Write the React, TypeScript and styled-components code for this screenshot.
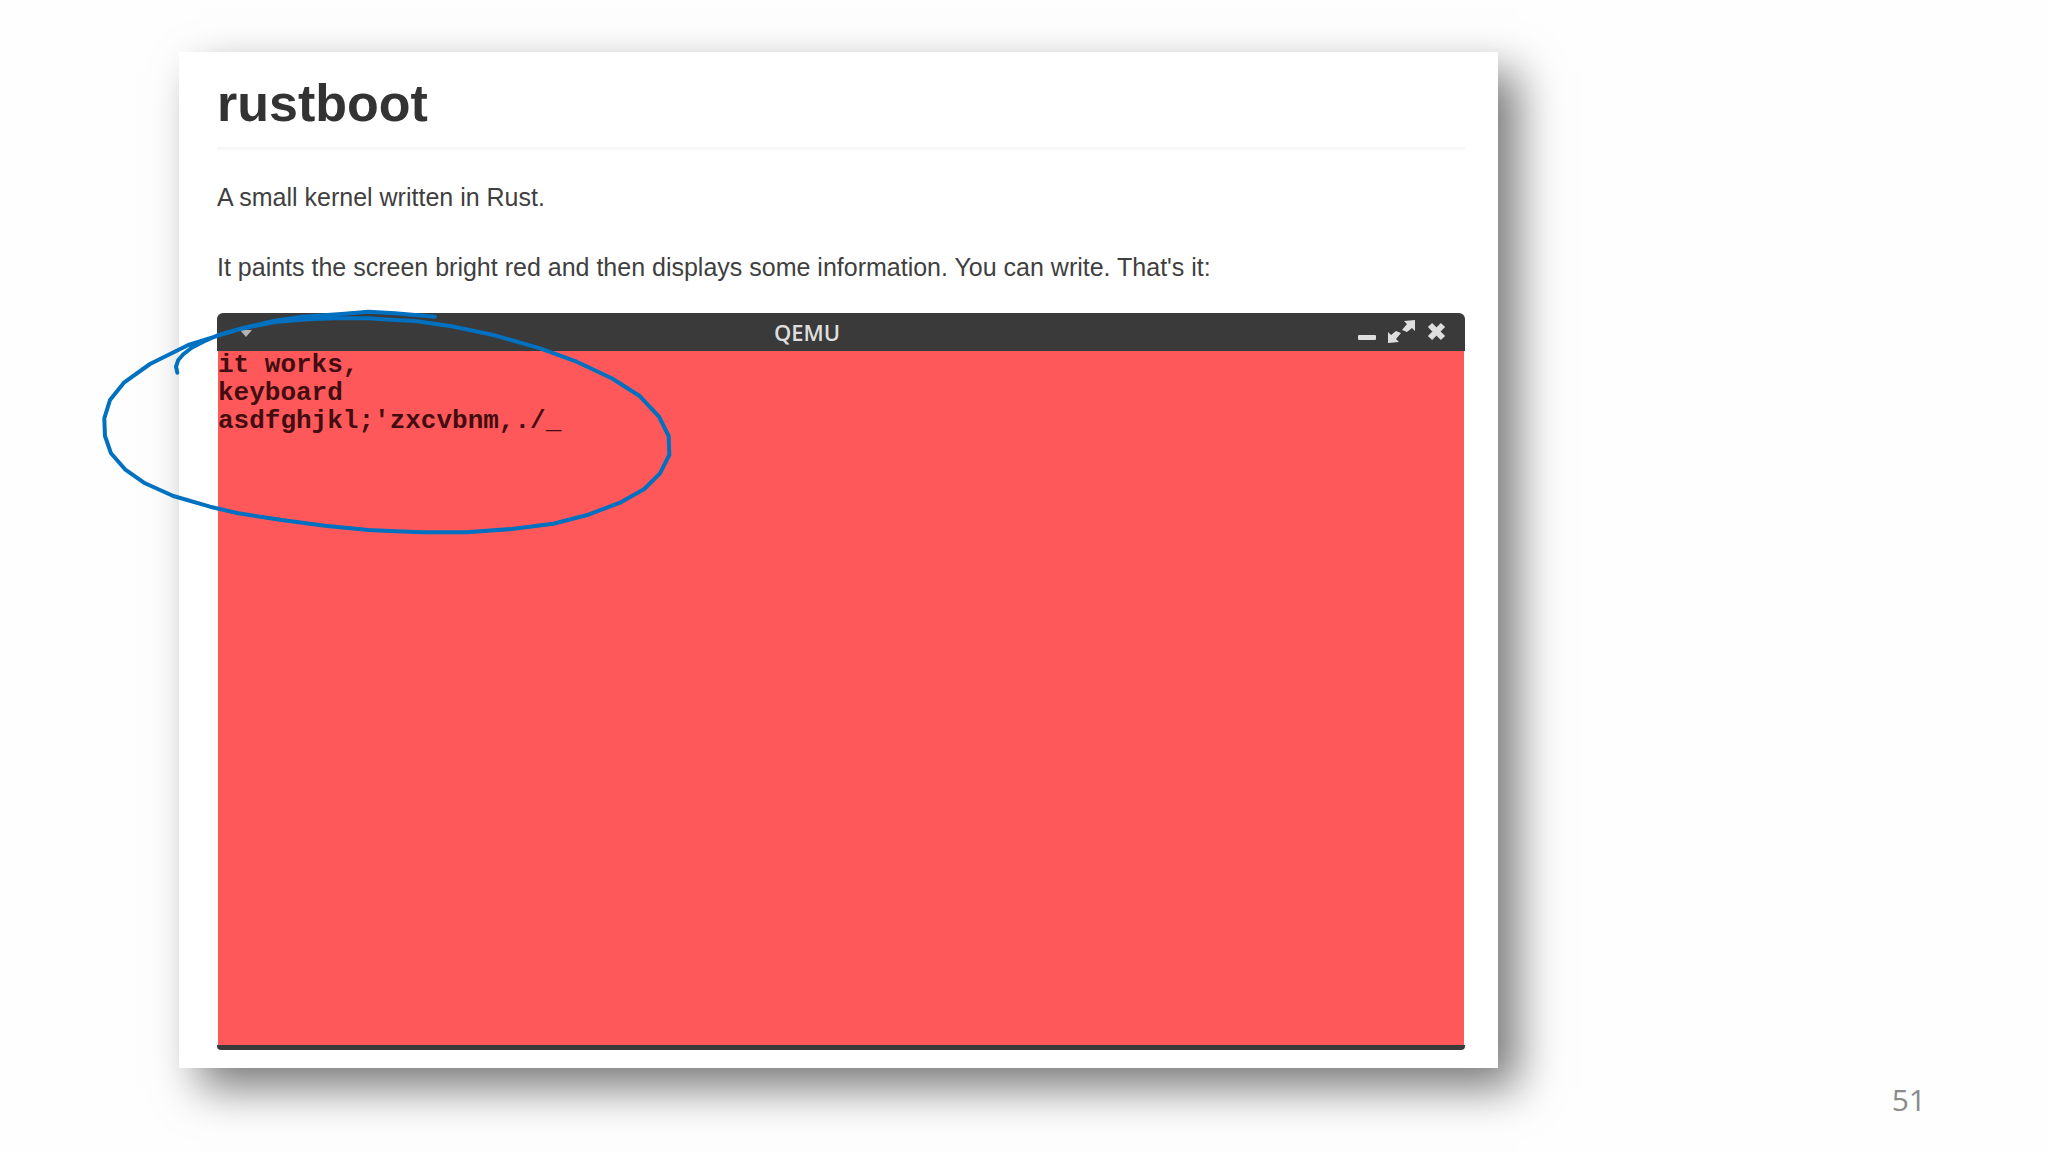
import React from "react";
import styled, { createGlobalStyle } from "styled-components";

const GlobalStyle = createGlobalStyle`
  * { box-sizing: border-box; }
  body { margin: 0; background: #fefefe; }
`;

const Slide = styled.main`
  display: grid;
  grid-template-columns: minmax(0, 1319px) 1fr;
  min-height: 100vh;
  padding: 52px 122px 32px 179px;
  font-family: "Liberation Sans", Arial, sans-serif;
  color: #3f3f3f;
`;

const Card = styled.article`
  align-self: start;
  padding: 21px 33px 18px 38px;
  background: #fff;
  box-shadow: 20px 20px 42px rgba(0, 0, 0, 0.52);
`;

const Title = styled.h1`
  margin: 0 0 31px;
  padding-bottom: 14px;
  border-bottom: 3px solid #f8f8f8;
  font-size: 52px;
  line-height: 60px;
  color: #333;
`;

const Paragraph = styled.p`
  margin: 0 0 38px;
  font-size: 25px;
  line-height: 32px;

  &:last-of-type {
    margin-bottom: 30px;
  }
`;

const Window = styled.section`
  position: relative;
  border-bottom: 5px solid #3a3a3a;
  border-radius: 6px 6px 4px 4px;
`;

const TitleBar = styled.header`
  display: flex;
  align-items: center;
  height: 38px;
  padding: 0 19px 0 16px;
  background: #3a3a3a;
  border-radius: 6px 6px 0 0;
`;

const WindowTitle = styled.h2`
  flex: 1;
  margin: 0;
  text-align: center;
  font-family: "Open Sans", "Noto Sans", sans-serif;
  font-size: 22px;
  font-weight: 600;
  line-height: 36px;
  color: #dedede;
`;

const Controls = styled.div`
  display: flex;
  align-items: center;
  gap: 10px;
`;

const IconButton = styled.button<{ $width: number }>`
  display: flex;
  align-items: center;
  justify-content: center;
  width: ${(p) => p.$width}px;
  height: 38px;
  padding: 0;
  border: 0;
  background: none;
  color: #dedede;
`;

const Screen = styled.pre`
  aspect-ratio: 1246 / 694;
  margin: 0 1px;
  background: #ff585a;
  color: #420d10;
  font-family: "Liberation Mono", "Courier New", monospace;
  font-size: 26px;
  font-weight: 700;
  line-height: 28px;
`;

const PenStroke = styled.svg`
  position: absolute;
  top: -13px;
  left: -117px;
  width: 590px;
  height: 240px;
  pointer-events: none;
`;

const PageNumber = styled.footer`
  align-self: end;
  text-align: right;
  font-family: "Open Sans", "Noto Sans", sans-serif;
  font-size: 30px;
  line-height: 40px;
  color: #8b8b8b;
`;

const consoleText = "it works,\nkeyboard\nasdfghjkl;'zxcvbnm,./_";

const loop =
  "M77.3 72.7L76 66.7L78.3 60L83.3 54.3L91.7 47.7L103.3 41.7L118.3 35L141.7 28.3L175 20.7L201.7 16.7L241.7 14L268.3 11.7L295 13.3L335 16.7" +
  "M88.3 45L118.3 35.7L141.7 28.7L175 22L208.3 19.3L241.7 18L268.3 18.3L290 19.7L315 21L351.7 26.3L393.3 35L440 48.3L476.7 61.7L511.7 78.3L539.3 95.7L559 116.7L568.7 136L569.3 155L560 173.3L544.3 189L520 202.7L488.3 214.7L453.3 223.7L411.7 229L366.7 232.3L321.7 232.3L290 231L268.3 230L225 225.7L181.7 220L138.3 213.3L110 206.7L73.3 196L45 183.3L25 169.3L11 153.3L5 136L4.3 118.3L10 100L24.3 82.3L50 64Z";

export default function App() {
  return (
    <>
      <GlobalStyle />
      <Slide>
        <Card>
          <Title>rustboot</Title>
          <Paragraph>A small kernel written in Rust.</Paragraph>
          <Paragraph>
            It paints the screen bright red and then displays some information. You can write. That's it:
          </Paragraph>
          <Window>
            <TitleBar>
              <IconButton $width={24} type="button" aria-label="Window menu">
                <svg width="24" height="38" viewBox="0 0 24 38" fill="#b4b4b4">
                  <path d="M7 17H19L13 24Z" />
                </svg>
              </IconButton>
              <WindowTitle>QEMU</WindowTitle>
              <Controls>
                <IconButton $width={20} type="button" aria-label="Minimize">
                  <svg width="20" height="38" viewBox="0 0 20 38" fill="currentColor">
                    <rect x="1" y="22" width="18" height="5" rx="1" />
                  </svg>
                </IconButton>
                <IconButton $width={30} type="button" aria-label="Maximize">
                  <svg width="30" height="38" viewBox="0 0 30 38" fill="currentColor">
                    <path d="M28 7V18L25 15L20 19L15 17L20 11L17 8Z" />
                    <path d="M1 30V19L4 22L9 18L14 20L9 26L12 29Z" />
                  </svg>
                </IconButton>
                <IconButton $width={19} type="button" aria-label="Close">
                  <svg width="19" height="38" viewBox="0 0 19 38" stroke="currentColor" strokeWidth="6">
                    <path d="M3 12L16 25M16 12L3 25" />
                  </svg>
                </IconButton>
              </Controls>
            </TitleBar>
            <Screen>{consoleText}</Screen>
            <PenStroke
              viewBox="0 0 590 240"
              fill="none"
              stroke="#0070c0"
              strokeWidth="4"
              strokeLinecap="round"
              strokeLinejoin="round"
              aria-hidden="true"
            >
              <path d={loop} />
            </PenStroke>
          </Window>
        </Card>
        <PageNumber>51</PageNumber>
      </Slide>
    </>
  );
}
